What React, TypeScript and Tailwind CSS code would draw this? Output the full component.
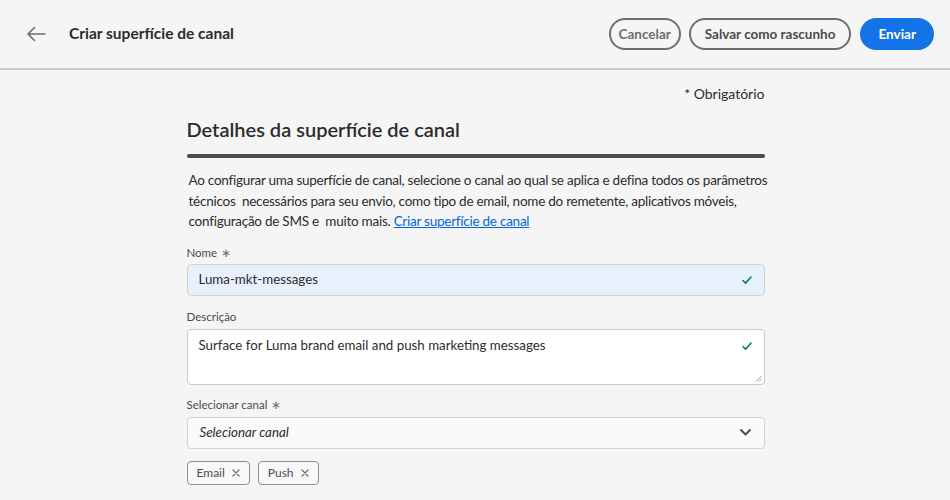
import React from "react";

const Check = () => (
  <svg width="12" height="12" viewBox="0 0 12 12" fill="none" className="shrink-0">
    <path d="M2 6.5l2.6 2.6L10 3" stroke="#12805c" strokeWidth="1.6" strokeLinecap="round" strokeLinejoin="round" />
  </svg>
);

const Star = () => <span className="text-[#6e6e6e] text-[12px] ml-[4px]">∗</span>;

const Tag: React.FC<{ label: string }> = ({ label }) => (
  <span className="flex items-center gap-[7px] h-[24px] px-[9px] border border-[#8e8e8e] rounded-[4px] text-[12px] text-[#4b4b4b] bg-[#f8f8f8]">
    {label}
    <svg width="8" height="8" viewBox="0 0 8 8">
      <path d="M1 1l6 6M7 1L1 7" stroke="#6e6e6e" strokeWidth="1.2" strokeLinecap="round" />
    </svg>
  </span>
);

const App: React.FC = () => {
  return (
    <div className="min-h-[500px] bg-[#f5f5f5] text-[#2c2c2c]" style={{ fontFamily: "Lato, 'Noto Sans', sans-serif" }}>
      <header className="h-[70px] flex items-center justify-between pl-[26px] pr-[16px] border-b-2 border-[#cacaca]">
        <div className="flex items-center gap-[23px]">
          <svg width="20" height="16" viewBox="0 0 20 16" fill="none">
            <path d="M19 8H2M8.5 1.5L2 8l6.5 6.5" stroke="#6e6e6e" strokeWidth="1.6" strokeLinecap="round" strokeLinejoin="round" />
          </svg>
          <h1 className="text-[15.5px] font-bold">Criar superfície de canal</h1>
        </div>
        <div className="flex items-center gap-[8px]">
          <button className="h-[32px] px-[8px] rounded-full border-2 border-[#6e6e6e] text-[13.5px] font-bold text-[#6e6e6e]">Cancelar</button>
          <button className="h-[32px] px-[14px] rounded-full border-2 border-[#6e6e6e] text-[13.5px] font-bold text-[#4b4b4b]">Salvar como rascunho</button>
          <button className="h-[32px] px-[18px] ml-[1px] rounded-full bg-[#1473e6] text-[13.5px] font-bold text-white">Enviar</button>
        </div>
      </header>

      <main className="w-[579px] mx-auto pl-[1px]">
        <div className="text-right text-[14px] mt-[14px] leading-[20px]">* Obrigatório</div>
        <h2 className="text-[20px] mt-[13px] leading-[24px] font-semibold">Detalhes da superfície de canal</h2>
        <div className="h-[4px] bg-[#4b4b4b] rounded-full mt-[13px]" />
        <p className="text-[13.5px] leading-[20.5px] mt-[12px] pl-[2px] tracking-[-0.25px] whitespace-nowrap">
          Ao configurar uma superfície de canal, selecione o canal ao qual se aplica e defina todos os parâmetros
          <br />
          técnicos&nbsp; necessários para seu envio, como tipo de email, nome do remetente, aplicativos móveis,
          <br />
          configuração de SMS e&nbsp; muito mais.{" "}
          <a className="text-[#0265dc] underline" href="#">Criar superfície de canal</a>
        </p>

        <label className="block text-[11.5px] text-[#4b4b4b] mt-[13px] leading-[16px]">Nome<Star /></label>
        <div className="mt-[3px] h-[32px] flex items-center justify-between px-[11px] rounded-[4px] border border-[#d3d3d3] bg-[#e8f0fe]">
          <span className="text-[13.3px]">Luma-mkt-messages</span>
          <Check />
        </div>

        <label className="block text-[11.5px] text-[#4b4b4b] mt-[13px] leading-[16px]">Descrição</label>
        <div className="relative mt-[4px] h-[56px] flex items-start justify-between px-[11px] pt-[6px] rounded-[4px] border border-[#cacaca] bg-white">
          <span className="text-[13.3px]">Surface for Luma brand email and push marketing messages</span>
          <span className="mt-[4px]"><Check /></span>
          <svg className="absolute right-[2px] bottom-[2px]" width="7" height="7" viewBox="0 0 7 7">
            <path d="M6.5 1L1 6.5M6.5 4L4 6.5" stroke="#8e8e8e" strokeWidth="0.9" />
          </svg>
        </div>

        <label className="block text-[11.5px] text-[#4b4b4b] mt-[12px] leading-[16px]">Selecionar canal<Star /></label>
        <div className="mt-[4px] h-[32px] flex items-center justify-between pl-[12px] pr-[13px] rounded-[4px] border border-[#d3d3d3] bg-[#fafafa]">
          <span className="text-[13.3px] italic">Selecionar canal</span>
          <svg width="11" height="7" viewBox="0 0 11 7" fill="none">
            <path d="M1 1l4.5 4.5L10 1" stroke="#4b4b4b" strokeWidth="1.8" strokeLinecap="round" strokeLinejoin="round" />
          </svg>
        </div>

        <div className="flex gap-[8px] mt-[12px]">
          <Tag label="Email" />
          <Tag label="Push" />
        </div>
      </main>
    </div>
  );
};

export default App;
